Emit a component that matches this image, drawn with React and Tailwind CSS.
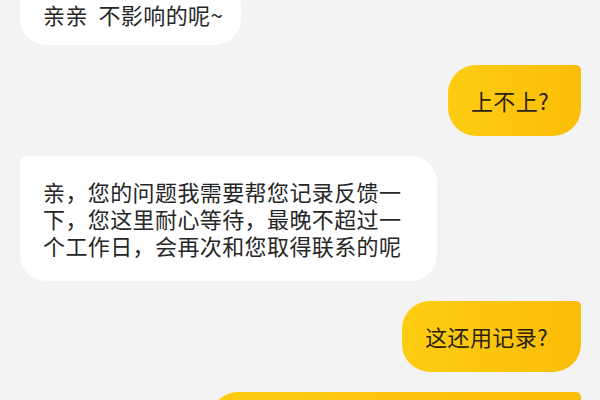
import React from 'react';

const font = { fontFamily: '"Noto Sans CJK SC", "Noto Sans", sans-serif' };

const Left = ({ children, className = '' }) => (
  <div className="flex justify-start">
    <div className={`bg-white text-[#262626] text-[22px] leading-[27px] tracking-[0.4px] pl-[23px] rounded-[26px] rounded-tl-[8px] ${className}`}>
      {children}
    </div>
  </div>
);

const Right = ({ children, className = '' }) => (
  <div className="flex justify-end">
    <div className={`bg-gradient-to-r from-[#fdcd12] to-[#fbbd06] text-[#2a220c] text-[22px] leading-[27px] tracking-[0.4px] py-[22px] pl-[23px] rounded-[28px] rounded-tr-[5px] ${className}`}>
      {children}
    </div>
  </div>
);

export default function App() {
  return (
    <div className="w-[600px] h-[400px] overflow-hidden bg-[#f3f3f3]" style={font}>
      <div className="flex flex-col gap-[20px] pl-[20px] pr-[19px] -mt-[21px]">
        <Left className="pt-[22px] pb-[17px] pr-[18px]">亲亲&nbsp; 不影响的呢~</Left>
        <Right className="pr-[32px]">上不上?</Right>
        <Left className="w-[417px] py-[22px] pr-[30px]">
          亲，您的问题我需要帮您记录反馈一下，您这里耐心等待，最晚不超过一个工作日，会再次和您取得联系的呢
        </Left>
        <Right className="pr-[33px]">这还用记录?</Right>
        <Right className="w-[371px] h-[71px]">{' '}</Right>
      </div>
    </div>
  );
}
